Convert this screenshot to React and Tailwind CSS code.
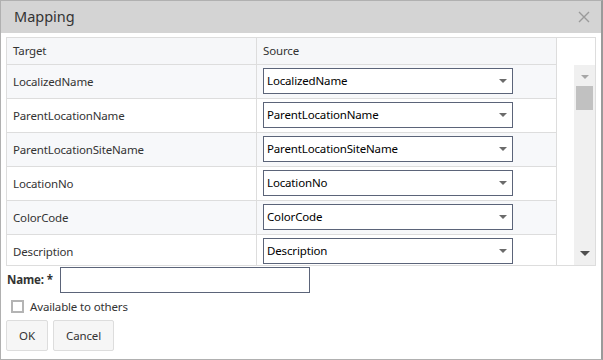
const rows = [
  "LocalizedName",
  "ParentLocationName",
  "ParentLocationSiteName",
  "LocationNo",
  "ColorCode",
  "Description",
];

const Caret = ({ color = "#6b6b6b" }) => (
  <svg width="8" height="4" viewBox="0 0 8 4">
    <path d="M0 0 L8 0 L4 4 Z" fill={color} />
  </svg>
);

const App = () => {
  return (
    <div
      className="w-[603px] h-[360px] bg-white border-l border-t border-b border-[#b0b0b0] border-r-2 border-r-[#9a9a9a] flex flex-col text-[11.5px] tracking-[-0.15px] text-[#333]"
      style={{ fontFamily: '"Noto Sans", "Open Sans", sans-serif' }}
    >
      {/* HEADER */}
      <div className="h-[32px] bg-[#d4d4d4] flex items-center justify-between pl-[13px] pr-[11px] shrink-0">
        <span className="text-[14.5px] tracking-normal text-[#333]">Mapping</span>
        <svg width="12" height="12" viewBox="0 0 12 12">
          <path d="M1 1 L11 11 M11 1 L1 11" stroke="#9a9a9a" strokeWidth="1.4" />
        </svg>
      </div>

      <div className="px-[5px] pt-[4px] flex flex-col">
        {/* GRID */}
        <div className="w-[590px] h-[229px] border border-[#dddddd] flex overflow-hidden">
          <div className="w-[550px] border-r border-[#dddddd] flex flex-col">
            <div className="h-[27px] shrink-0 flex bg-[#f6f7f9] border-b border-[#dddddd]">
              <div className="w-[250px] border-r border-[#dddddd] pl-[6px] flex items-center">Target</div>
              <div className="flex-1 pl-[6px] flex items-center">Source</div>
            </div>
            {rows.map((name, i) => (
              <div
                key={name}
                className={`h-[34px] shrink-0 flex border-b border-[#dddddd] ${i % 2 === 0 ? "bg-[#f7f8fa]" : "bg-white"}`}
              >
                <div className="w-[250px] border-r border-[#dddddd] pl-[6px] flex items-center">{name}</div>
                <div className="flex-1 pl-[6px] pt-[3px]">
                  <div className="w-[250px] h-[26px] bg-white border border-[#5b6479] flex items-center justify-between pl-[3px] pr-[5px] text-black">
                    <span>{name}</span>
                    <Caret />
                  </div>
                </div>
              </div>
            ))}
          </div>
          <div className="flex-1 flex flex-col">
            <div className="h-[27px] shrink-0" />
            <div className="flex-1 flex justify-end">
              <div className="w-[21px] bg-[#f0f0f0] flex flex-col items-center pt-[10px] pb-[9px]">
                <Caret color="#a6a6a6" />
                <div className="w-[17px] h-[24px] bg-[#c1c1c1] mt-[7px]" />
                <div className="flex-1" />
                <svg width="10" height="5" viewBox="0 0 10 5">
                  <path d="M0 0 L10 0 L5 5 Z" fill="#4f4f4f" />
                </svg>
              </div>
            </div>
          </div>
        </div>

        {/* NAME */}
        <div className="flex items-center h-[27px]">
          <span className="font-bold w-[54px] pl-[1px]">Name: *</span>
          <div className="w-[250px] h-[26px] border border-[#5b6479]" />
        </div>

        {/* CHECKBOX */}
        <div className="flex items-center gap-[6px] pl-[5px] mt-[5px]">
          <div className="w-[13px] h-[13px] border-2 border-[#b4b4b4] bg-white" />
          <span>Available to others</span>
        </div>

        {/* BUTTONS */}
        <div className="flex gap-[5px] mt-[5px]">
          <button className="w-[42px] h-[31px] rounded-[2px] border border-[#dddddd] bg-[#f6f6f6] text-[#333]">OK</button>
          <button className="w-[61px] h-[31px] rounded-[2px] border border-[#dddddd] bg-[#f6f6f6] text-[#333]">Cancel</button>
        </div>
      </div>
    </div>
  );
};

export default App;
